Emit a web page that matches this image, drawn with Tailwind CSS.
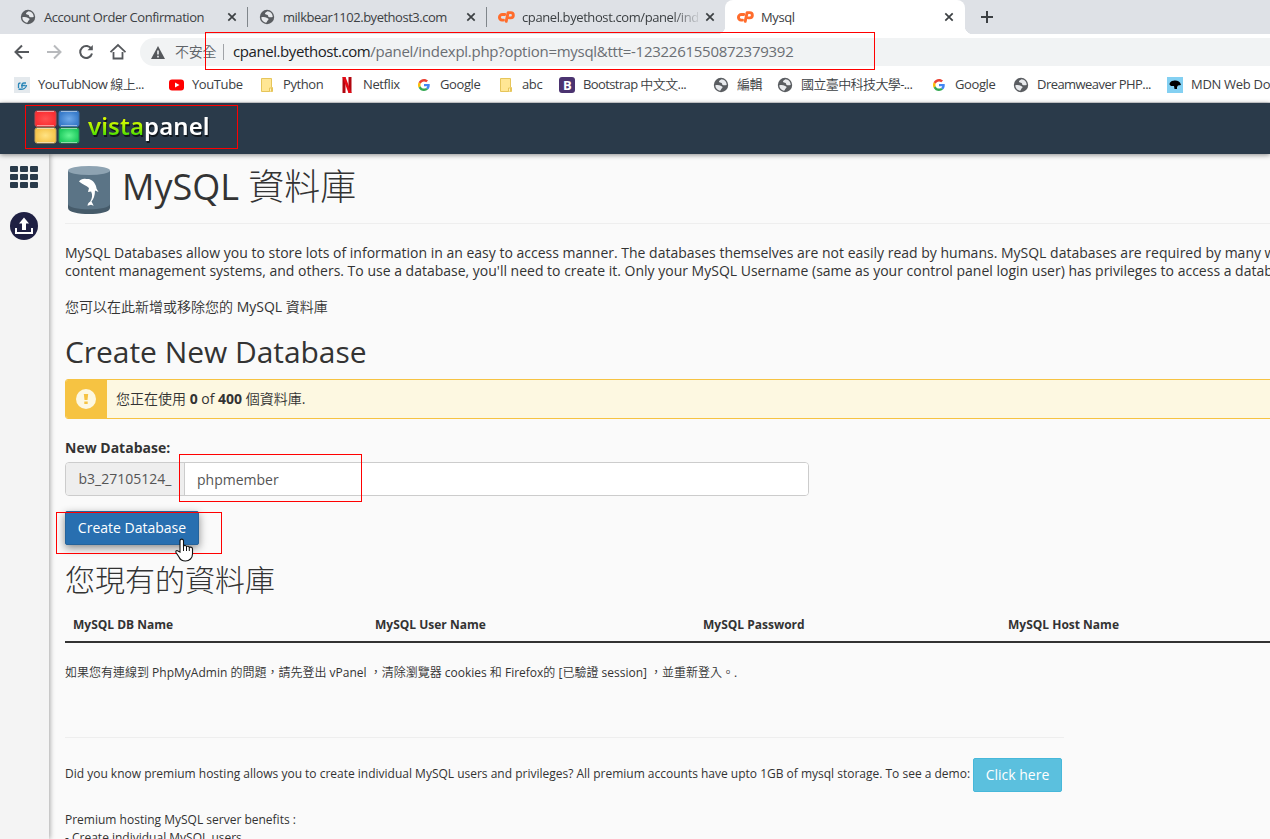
<!DOCTYPE html>
<html lang="zh-Hant"><head><meta charset="utf-8"><title>Mysql</title>
<script src="https://cdn.jsdelivr.net/npm/@tailwindcss/browser@4"></script></head>
<body class="w-[1270px] h-[839px] overflow-hidden relative bg-[#fafafa] font-['Open_Sans','Noto_Sans_CJK_TC_DemiLight','Noto_Sans_CJK_TC',sans-serif] text-[#333] whitespace-nowrap">
<svg class="hidden">
<symbol id="globe" viewBox="0 0 16 16"><circle cx="8" cy="8" r="7.200" fill="#5a5d61"/><path d="M2.300 8.200c2-.4 4-.3 4.900.4.900.8 2.200.5 2.300 1.600.1 1-1.100 1-1.400 2-.2.700-.5 1.300-1.200 1.500C4.200 13.200 2.300 11 2.300 8.200zM8.500 2.300C7.800 3.300 5.800 3.400 6 4.800c.2 1.200 1.700.5 2.600 1.200.8.700.2 1.600 1.300 2.100 1.200.5 2.400-.1 3.800-.2C13.700 4.800 11.500 2.500 8.500 2.300z" fill="#e8eaed"/></symbol>
<symbol id="cp" viewBox="0 0 17 12"><g fill="none" stroke="#ff6c2c" stroke-width="2.900" stroke-linecap="round" stroke-linejoin="round"><path d="M6.800 3.500H4.400a2.700 2.700 0 0 0-.3 5.600h1.400"/><path d="M8.200 10.400 10.100 1.600h2.600a2.600 2.600 0 0 1 0 5.300h-1.200"/></g></symbol>
<symbol id="x" viewBox="0 0 10 10"><path d="M1.300 1.300l7.400 7.400M8.700 1.300L1.300 8.700" stroke="#3c4043" stroke-width="1.700"/></symbol>
<symbol id="g" viewBox="0 0 48 48"><path fill="#EA4335" d="M24 9.500c3.540 0 6.710 1.220 9.210 3.600l6.850-6.850C35.900 2.380 30.470 0 24 0 14.620 0 6.510 5.380 2.560 13.220l7.980 6.190C12.430 13.720 17.740 9.500 24 9.500z"/><path fill="#4285F4" d="M46.980 24.550c0-1.570-.15-3.090-.38-4.550H24v9.020h12.940c-.58 2.960-2.260 5.480-4.780 7.180l7.730 6c4.510-4.180 7.090-10.360 7.090-17.650z"/><path fill="#FBBC05" d="M10.530 28.590c-.48-1.450-.76-2.990-.76-4.590s.27-3.140.76-4.590l-7.980-6.190C.92 16.460 0 20.120 0 24s.92 7.540 2.560 10.780l7.970-6.190z"/><path fill="#34A853" d="M24 48c6.480 0 11.930-2.130 15.890-5.810l-7.730-6c-2.150 1.450-4.920 2.300-8.160 2.300-6.260 0-11.570-4.220-13.470-9.910l-7.980 6.190C6.510 42.620 14.620 48 24 48z"/></symbol>
<symbol id="folder" viewBox="0 0 16 16"><path d="M2.500 1.500h10v9h1v4h-11z" fill="#ffe694" stroke="#e6c55a"/><path d="M10.500 14.500v-3.500h2v3.500" fill="#fff0b8" stroke="#e6c55a"/></symbol>
</svg>

<!-- Tab strip -->
<div class="h-[34px] bg-[#dee1e6] flex pl-2 text-[13px] text-[#3c4043]">
 <div class="w-[240px] -mr-px flex items-center pl-3 relative"><svg class="size-4 mr-2"><use href="#globe"/></svg><span class="w-[183px] tracking-[-0.45px] pt-px">Account Order Confirmation</span><svg class="size-[10px]"><use href="#x"/></svg><i class="absolute right-0 top-[7px] h-5 w-px bg-[#80868b]"></i></div>
 <div class="w-[240px] -mr-px flex items-center pl-3 relative"><svg class="size-4 mr-2"><use href="#globe"/></svg><span class="w-[183px] tracking-[-0.48px] pt-px">milkbear1102.byethost3.com</span><svg class="size-[10px]"><use href="#x"/></svg><i class="absolute right-0 top-[7px] h-5 w-px bg-[#80868b]"></i></div>
 <div class="w-[239px] flex items-center pl-3"><svg class="w-[17px] h-3 mr-[7px]"><use href="#cp"/></svg><span class="w-[176px] mr-[7px] overflow-hidden tracking-[-0.4px] pt-px [mask-image:linear-gradient(to_right,black_150px,transparent_180px)]">cpanel.byethost.com/panel/ind</span><svg class="size-[10px]"><use href="#x"/></svg></div>
 <div class="w-[240px] bg-white rounded-t-lg flex items-center pl-3 relative"><i class="absolute -left-2 bottom-0 size-2 bg-[radial-gradient(circle_at_0_0,transparent_8px,white_8.500px)]"></i><i class="absolute -right-2 bottom-0 size-2 bg-[radial-gradient(circle_at_100%_0,transparent_8px,white_8.500px)]"></i><svg class="w-[17px] h-3 mr-[7px]"><use href="#cp"/></svg><span class="w-[183px] tracking-[-0.4px] pt-px">Mysql</span><svg class="size-[10px]"><use href="#x"/></svg></div>
 <svg class="size-3 ml-4 mt-[11px]" viewBox="0 0 12 12"><path d="M6 0v12M0 6h12" stroke="#3c4043" stroke-width="2"/></svg>
</div>

<!-- Address row -->
<div class="h-9 bg-white flex items-center">
 <svg class="w-[126px] h-7 mr-[14px]" viewBox="0 0 126 28" fill="none" stroke="#55585c" stroke-width="2"><path d="M29 14H16m6-6.500L15.500 14l6.500 6.500"/><path stroke="#b8babd" d="M47 14h13m-6-6.500l6.500 6.500-6.500 6.500"/><path d="M91.500 11.200A6 6 0 1 0 92 15.500"/><path d="M92.800 7v5.300h-5.300z" fill="#55585c" stroke="none"/><path d="M113.500 14v6.500h9V14M110.500 14.200L118 7l7.500 7.200" stroke-width="1.800"/></svg>
 <div class="flex-1 h-7 bg-[#f1f3f4] rounded-l-full flex items-center pl-[11px]">
  <svg class="w-[14px] h-[13px] mr-[10px]" viewBox="0 0 14 13"><path d="M7 0l7 13H0z" fill="#55585c"/><path d="M7 4.500v4M7 9.800v1.700" stroke="#f1f3f4" stroke-width="1.600"/></svg>
  <span class="w-12 text-[14px] text-[#5f6368] tracking-[-0.3px] pb-0.5">不安全</span><i class="w-px h-4 bg-[#a0a3a7] mr-[9px]"></i>
  <span class="text-[15px] text-[#6a6e73] tracking-[-0.27px] pb-0.5"><span class="text-[#202124] tracking-[-0.42px]">cpanel.byethost.com</span>/panel/indexpl.php?option=mysql&amp;ttt=-1232261550872379392</span>
 </div>
</div>

<!-- Bookmarks -->
<div class="h-[33px] bg-white border-b border-[#d8dadd] flex items-center pl-[14px] pb-[3px] text-[13px] text-[#3c4043] tracking-[-0.4px]">
 <div class="w-[154px] shrink-0 flex items-center gap-2 tracking-[-0.5px]"><svg class="size-4" viewBox="0 0 16 16"><path fill="#e4e9ed" d="M0 0h16v16H0z"/><path d="M4.500 11V7.500q0-1.500 2-1.500M8 11V8q0-2 2-2h2M4.500 12c5 1 8-1 8-4M7 8.500h4.500" stroke="#2a86b8" stroke-width="1.300" fill="none"/></svg>YouTubNow 線上...</div>
 <div class="w-[91px] shrink-0 flex items-center gap-2"><svg class="size-4" viewBox="0 0 16 16"><rect x="1" y="2.500" width="15" height="11" rx="3" fill="#f00"/><path d="M7 5.500l4.500 2.500L7 10.500z" fill="#fff"/></svg>YouTube</div>
 <div class="w-[80px] shrink-0 flex items-center gap-2"><svg class="size-4"><use href="#folder"/></svg>Python</div>
 <div class="w-[77px] shrink-0 flex items-center gap-2"><svg class="size-4" viewBox="0 0 16 16"><path d="M3.500 0h3v16h-3zM9.500 0h3v16h-3z" fill="#b1060f"/><path d="M3.500 0h3l6 16h-3z" fill="#e50914"/></svg>Netflix</div>
 <div class="w-[82px] shrink-0 flex items-center gap-2"><svg class="size-4 p-0.5"><use href="#g"/></svg>Google</div>
 <div class="w-[61px] shrink-0 flex items-center gap-2"><svg class="size-4"><use href="#folder"/></svg>abc</div>
 <div class="w-[154px] shrink-0 flex items-center gap-2 tracking-[-0.6px]"><b class="size-4 rounded-[3px] bg-[#4b3370] text-white text-[13px] leading-4 text-center">B</b>Bootstrap 中文文...</div>
 <div class="w-[64px] shrink-0 flex items-center gap-2"><svg class="size-4"><use href="#globe"/></svg>編輯</div>
 <div class="w-[154px] shrink-0 flex items-center gap-2 tracking-[-0.6px]"><svg class="size-4"><use href="#globe"/></svg>國立臺中科技大學-...</div>
 <div class="w-[82px] shrink-0 flex items-center gap-2"><svg class="size-4 p-0.5"><use href="#g"/></svg>Google</div>
 <div class="w-[154px] shrink-0 flex items-center gap-2 tracking-[-0.55px]"><svg class="size-4"><use href="#globe"/></svg>Dreamweaver PHP...</div>
 <div class="shrink-0 flex items-center gap-2 tracking-[-0.3px]"><svg class="size-4" viewBox="0 0 16 16"><path fill="#83d0f2" d="M0 0h16v16H0z"/><path d="M2.500 7.500c0-2 1.500-3.800 4-3.800 3.500-.5 6.500.3 7.500 4.300l-3 .5-1 1.500v2L7.500 12l-.5-3H4z"/></svg>MDN Web Docs</div>
</div>

<!-- Panel header -->
<header class="h-[51px] bg-[#2a3a4a] relative z-10 shadow-[0_1px_5px_rgba(0,0,0,.45)] flex items-center pl-[34px]">
 <svg class="w-[46px] h-[34px] mr-[8px] mt-[-3px]" viewBox="0 0 46 34">
  <defs>
  <radialGradient id="r"><stop stop-color="#ff5050"/><stop offset="1" stop-color="#fb2f33"/></radialGradient><radialGradient id="b"><stop stop-color="#70aaea"/><stop offset="1" stop-color="#397ccb"/></radialGradient><radialGradient id="y"><stop stop-color="#ffe384"/><stop offset="1" stop-color="#f5c54b"/></radialGradient><radialGradient id="n"><stop stop-color="#63f592"/><stop offset="1" stop-color="#20cc60"/></radialGradient></defs>
  <g stroke-width="1"><rect x="1" y="1" width="21" height="15.500" rx="2" fill="url(#r)" stroke="#c04a4e"/><rect x="25" y="1" width="20" height="15.500" rx="2" fill="url(#b)" stroke="#3c6ea8"/><rect x="1" y="18" width="21" height="15" rx="2" fill="url(#y)" stroke="#c7a55a"/><rect x="25" y="18" width="20" height="15" rx="2" fill="url(#n)" stroke="#239355"/></g>
  <path d="M3 1.500h17M27 1.500h16M3 15.500h17M27 15.500h16M3 18.500h17M27 18.500h16M3 32.500h17M27 32.500h16" stroke="#fff" stroke-opacity=".5"/></svg>
 <div class="font-['Noto_Sans'] font-semibold text-[24px] leading-8 -mt-[6px] tracking-[0.1px] [filter:drop-shadow(1px_2px_0_rgba(0,0,0,.6))]"><span class="text-transparent bg-clip-text bg-linear-to-b from-[#d8fa00] from-35% to-[#3fe000] to-80%">vista</span><span class="text-white">panel</span></div>
</header>

<div class="flex h-[685px]">
 <!-- Sidebar -->
 <nav class="w-[49px] shrink-0 bg-[#f4f4f4] shadow-[1px_0_5px_rgba(0,0,0,.35)] flex flex-col items-start pl-[10px] pt-3">
  <svg class="w-7 h-[22px]" viewBox="0 0 28 22" fill="#293a4a"><g id="row"><rect width="8" height="6" rx="1"/><rect x="10" width="8" height="6" rx="1"/><rect x="20" width="8" height="6" rx="1"/></g><use href="#row" y="8"/><use href="#row" y="16"/></svg>
  <svg class="size-7 mt-6" viewBox="0 0 28 28"><circle cx="14" cy="14" r="14" fill="#1f2043"/><path d="M14 5.500l5 6h-3v6.500h-4v-6.500H9z" fill="#fff"/><path d="M6 16v5h16v-5" fill="none" stroke="#fff" stroke-width="2"/></svg>
 </nav>
 <main class="pl-4 w-[1221px] shrink-0 overflow-hidden">
  <h1 class="h-[70px] border-b border-[#eee] flex items-center pl-[3px] text-[36px] font-['Open_Sans','Noto_Sans_CJK_TC_Light','Noto_Sans_CJK_TC',sans-serif]">
   <svg class="w-[42px] h-12 mr-[12px] mt-[3px]" viewBox="0 0 42 48"><path d="M0 5v37c0 8 42 8 42 0V5z" fill="#465b6a"/><path d="M0 5v33c0 7 42 7 42 0V5z" fill="#5b7486"/><ellipse cx="21" cy="4.500" rx="21" ry="4.500" fill="#8ea3b2"/><path d="M11 15.500c1.500-2 4-3 7-2.500l3 0c4.500 1.500 7 5.500 7.500 9.500l2 3.500-3.500-1.500c0 5-1.500 8.500-3.500 11l2.200 4.200-2.700-1-3.500 1c.3-2.300 1.300-3.500 2.800-4.200 2-3.500 2.500-6.500.8-10l-3.100.5 1-4c-3-2.500-6-3.500-10-6.500z" fill="#fff"/></svg>
   <span class="-mt-[3px]">MySQL 資料庫</span></h1>
  <p class="mt-5 text-[14px] leading-[18px]">MySQL Databases allow you to store lots of information in an easy to access manner. The databases themselves are not easily read by humans. MySQL databases are required by many web<br>content management systems, and others. To use a database, you'll need to create it. Only your MySQL Username (same as your control panel login user) has privileges to access a database<br><br>您可以在此新增或移除您的 MySQL 資料庫</p>
  <h2 class="mt-[18px] h-9 text-[30px] leading-9 tracking-[-0.05px]">Create New Database</h2>
  <div class="mt-[9px] h-10 w-[1300px] flex rounded-[3px] border border-[#f6c342] bg-[#fdf8e1] overflow-hidden text-[14px] leading-[38px]">
   <div class="w-[41px] bg-[#f6c342] flex items-center justify-center pr-px mr-[9px]"><svg class="size-5" viewBox="0 0 20 20"><circle cx="10" cy="10" r="10" fill="#fdf8e1"/><path d="M7.800 5h4.400l-.7 6h-3zM8.300 12.500h3.400v2.500H8.300z" fill="#f6c342"/></svg></div>
   <span>您正在使用 <b>0</b> of <b>400</b> 個資料庫.</span></div>
  <label class="block mt-5 h-[18px] text-[14px] leading-[18px] font-bold">New Database:</label>
  <div class="mt-[5px] w-[744px] h-[34px] flex rounded border border-[#ccc] overflow-hidden text-[14px] leading-[32px] text-[#555]"><span class="w-[119px] bg-[#eee] border-r border-[#ccc] pl-[12.500px]">b3_27105124_</span><span class="flex-1 bg-white pl-3 pt-px">phpmember</span></div>
  <button class="mt-[15px] w-[134px] h-[34px] block bg-[#286fb0] border border-[#25639b] rounded-[2px] text-white text-[14px] leading-[32px] shadow-[0_3px_9px_rgba(0,0,0,.45)]">Create Database</button>
  <h2 class="mt-[17px] h-9 text-[30px] leading-9 font-['Open_Sans','Noto_Sans_CJK_TC_Light','Noto_Sans_CJK_TC',sans-serif]">您現有的資料庫</h2>
  <div class="mt-2 h-[37px] w-[1300px] border-b-2 border-[#333] flex pl-2 pt-[10px] text-[12px] leading-[18px] font-bold"><span class="w-[302px]">MySQL DB Name</span><span class="w-[328px]">MySQL User Name</span><span class="w-[305px]">MySQL Password</span><span>MySQL Host Name</span></div>
  <p class="mt-[21px] text-[12px] leading-[18px]">如果您有連線到 PhpMyAdmin 的問題，請先登出 vPanel ，清除瀏覽器 cookies 和 Firefox的 [已驗證 session] ，並重新登入。.</p>
  <div class="mt-[55px] w-[999px] h-[21px] border-t border-[#eee]"></div>
  <div class="h-[34px] flex text-[12px] leading-[31px]"><span class="w-[908px] tracking-[-0.005px]">Did you know premium hosting allows you to create individual MySQL users and privileges? All premium accounts have upto 1GB of mysql storage. To see a demo:</span><button class="w-[89px] h-[34px] bg-[#5bc0de] border border-[#46b8da] rounded-[2px] text-white text-[14px] leading-[32px]">Click here</button></div>
  <p class="mt-[19px] text-[12px] leading-[18px]">Premium hosting MySQL server benefits :<br>- Create individual MySQL users</p>
 </main>
</div>

<!-- Highlight frames -->
<i class="absolute z-20 left-[205px] top-8 w-[670px] h-[38px] border border-[#f00]"></i>
<i class="absolute z-20 left-[25px] top-[105px] w-[213px] h-11 border border-[#f00]"></i>
<i class="absolute z-20 left-[179px] top-[454px] w-[183px] h-12 border border-[#f00]"></i>
<i class="absolute z-20 left-[56px] top-[512px] w-[166px] h-[42px] border border-[#f00]"></i>
<svg class="absolute z-30 left-[175px] top-[538px] w-[19px] h-6" viewBox="0 0 19 24"><path d="M5 14V2.500a1.800 1.800 0 0 1 3.500 0V8c1-1 2.600-.6 3 .6 1-.7 2.400-.3 2.800.8 1.200-.5 3.200-.2 3.200 1.600v5c0 4-3 7-7 7-3.500 0-5.500-1.500-6.500-4L1 14.500c-.6-1.800 1-2.500 2-1.500z" fill="#fff" stroke="#111" stroke-width="1.100"/><path d="M8.500 8v5M11.500 8.500v4.500M14.300 9.500v3.500" stroke="#111"/></svg>
</body></html>
